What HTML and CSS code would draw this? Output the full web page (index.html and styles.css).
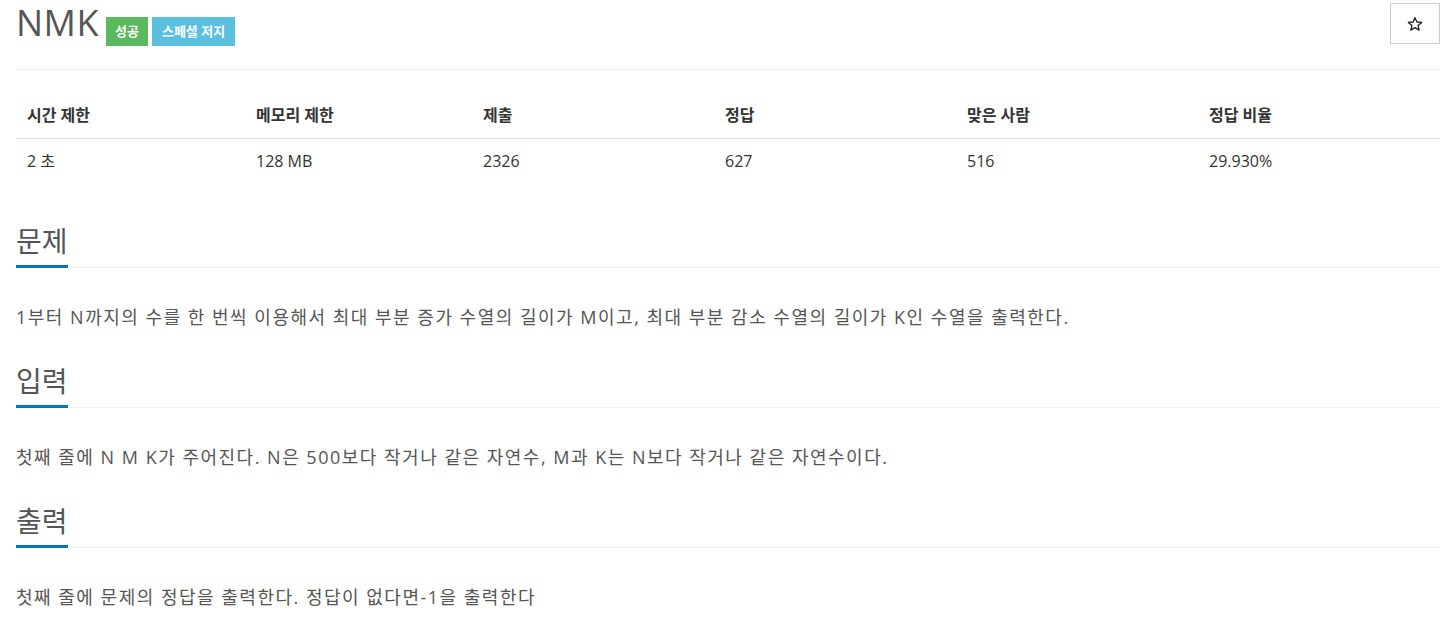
FILE: index.html
```html
<!DOCTYPE html>
<html lang="ko">
<head>
  <meta charset="UTF-8">
  <meta name="viewport" content="width=device-width, initial-scale=1.0">
  <title>NMK</title>
  <link rel="stylesheet" href="styles.css">
</head>
<body>
  <div class="container">
    <div class="page-header">
      <h1 id="problem_title">NMK</h1>
      <div class="labels">
        <span class="label label-success">성공</span>
        <span class="label label-info">스페셜 저지</span>
      </div>
      <button class="btn-star" title="즐겨찾기">
        <svg width="16" height="16" viewBox="0 0 24 24" fill="none" stroke="#222" stroke-width="2" stroke-linejoin="round">
          <polygon points="12,2.5 14.9,9 22,9.6 16.6,14.2 18.2,21.2 12,17.5 5.8,21.2 7.4,14.2 2,9.6 9.1,9"/>
        </svg>
      </button>
    </div>

    <table class="problem-info">
      <thead>
        <tr>
          <th class="c1">시간 제한</th>
          <th class="c2">메모리 제한</th>
          <th class="c3">제출</th>
          <th class="c4">정답</th>
          <th class="c5">맞은 사람</th>
          <th class="c6">정답 비율</th>
        </tr>
      </thead>
      <tbody>
        <tr>
          <td>2 초</td>
          <td>128 MB</td>
          <td>2326</td>
          <td>627</td>
          <td>516</td>
          <td>29.930%</td>
        </tr>
      </tbody>
    </table>

    <section class="problem-section">
      <div class="headline"><h2>문제</h2></div>
      <p>1부터 N까지의 수를 한 번씩 이용해서 최대 부분 증가 수열의 길이가 M이고, 최대 부분 감소 수열의 길이가 K인 수열을 출력한다.</p>
    </section>

    <section class="problem-section">
      <div class="headline"><h2>입력</h2></div>
      <p>첫째 줄에 N M K가 주어진다. N은 500보다 작거나 같은 자연수, M과 K는 N보다 작거나 같은 자연수이다.</p>
    </section>

    <section class="problem-section">
      <div class="headline"><h2>출력</h2></div>
      <p>첫째 줄에 문제의 정답을 출력한다. 정답이 없다면-1을 출력한다</p>
    </section>
  </div>
</body>
</html>
```

FILE: styles.css
```css
/* Reset and overall layout */
* {
  box-sizing: border-box;
  margin: 0;
  padding: 0;
}
body {
  font-family: 'Open Sans', 'Noto Sans CJK KR', sans-serif;
  background: #fff;
  color: #333;
  font-size: 14px;
}
.container {
  padding: 0 10px 0 16px;
}
/* Title */
.page-header {
  display: flex;
  align-items: flex-start;
  height: 70px;
  border-bottom: 1px solid #eee;
}
.page-header h1 {
  font-size: 36px;
  font-weight: 400;
  line-height: 46px;
  color: #555;
  letter-spacing: 0.5px;
  margin-right: 7px;
}
.labels {
  display: flex;
  gap: 4px;
  margin-top: 17px;
}
.label {
  display: inline-block;
  height: 29px;
  line-height: 29px;
  padding: 0 9px;
  font-size: 13px;
  font-weight: 700;
  color: #fff;
}
.label-success {
  background: #5cb85c;
}
.label-info {
  background: #5bc0de;
  padding: 0 10px;
}
.btn-star {
  margin-left: auto;
  margin-top: 3px;
  width: 50px;
  height: 41px;
  background: #fff;
  border: 1px solid #ccc;
  display: flex;
  align-items: center;
  justify-content: center;
  cursor: pointer;
}
/* Info table */
.problem-info {
  width: 100%;
  margin-top: 23px;
  border-collapse: collapse;
  table-layout: fixed;
}
.problem-info th {
  text-align: left;
  font-size: 16px;
  font-weight: 700;
  line-height: 20px;
  padding: 12px 11px 13px;
  border-bottom: 1px solid #ddd;
  color: #333;
}
.problem-info td {
  font-size: 16px;
  line-height: 22px;
  padding: 11px 11px 9px;
  color: #333;
}
.c1 { width: 229px; }
.c2 { width: 227px; }
.c3 { width: 242px; }
.c4 { width: 242px; }
.c5 { width: 242px; }
/* Sections */
.problem-section {
  margin-top: 45px;
}
.problem-section + .problem-section {
  margin-top: 36px;
}
.headline {
  border-bottom: 1px dotted #e4e9f0;
  height: 42px;
}
.headline h2 {
  display: inline-block;
  font-size: 28px;
  font-weight: 400;
  line-height: 30px;
  color: #555;
  padding-bottom: 9px;
  border-bottom: 3px solid #0076c0;
}
.problem-section p {
  margin-top: 36px;
  font-size: 18px;
  line-height: 26px;
  letter-spacing: 1.5px;
  color: #555;
}
```
